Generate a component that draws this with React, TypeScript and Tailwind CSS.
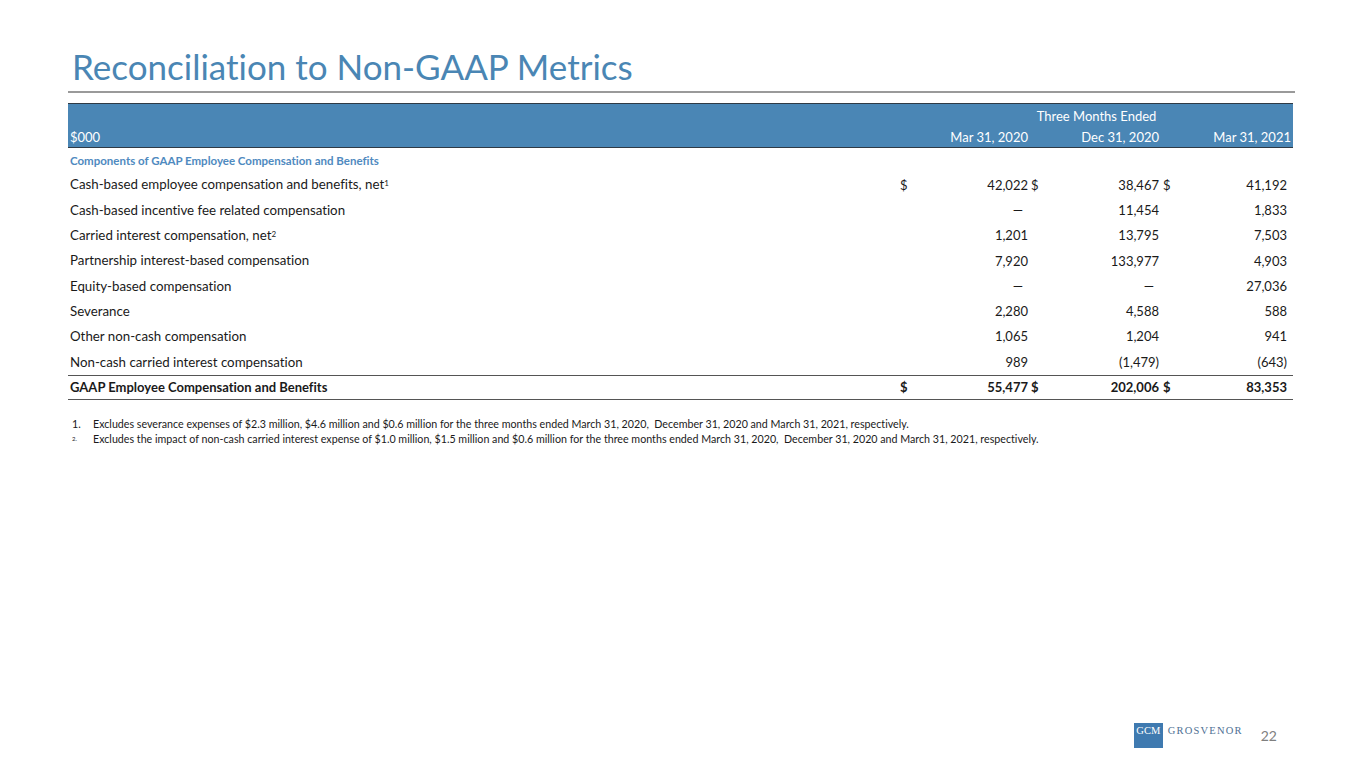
const rows = [
  { label: "Cash-based employee compensation and benefits, net", sup: "1", dollar: true, v: ["42,022", "38,467", "41,192"] },
  { label: "Cash-based incentive fee related compensation", v: ["—", "11,454", "1,833"] },
  { label: "Carried interest compensation, net", sup: "2", v: ["1,201", "13,795", "7,503"] },
  { label: "Partnership interest-based compensation", v: ["7,920", "133,977", "4,903"] },
  { label: "Equity-based compensation", v: ["—", "—", "27,036"] },
  { label: "Severance", v: ["2,280", "4,588", "588"] },
  { label: "Other non-cash compensation", v: ["1,065", "1,204", "941"] },
  { label: "Non-cash carried interest compensation", v: ["989", "(1,479)", "(643)"] },
];

function Val({ s }: { s: string }) {
  // dashes sit a little left of the number column's right edge
  return s === "—" ? <span className="mr-[5px]">{s}</span> : <span>{s}</span>;
}

function Cells({ v, dollar, bold }: { v: string[]; dollar?: boolean; bold?: boolean }) {
  const w = bold ? "font-bold" : "";
  return (
    <>
      <div className={`flex justify-between items-center pr-[2px] ${w}`}>
        <span>{dollar ? "$" : ""}</span>
        <Val s={v[0]} />
      </div>
      <div className={`flex justify-between items-center pl-[1px] pr-[2px] ${w}`}>
        <span>{dollar ? "$" : ""}</span>
        <Val s={v[1]} />
      </div>
      <div className={`flex justify-between items-center pl-[2px] pr-[6px] ${w}`}>
        <span>{dollar ? "$" : ""}</span>
        <Val s={v[2]} />
      </div>
    </>
  );
}

export default function App() {
  return (
    <div className="w-[1365px] h-[768px] bg-white flex flex-col font-['Lato','Open_Sans',sans-serif] text-[#1a1a1a] [font-variant-ligatures:none]">
      <h1 className="pl-[72px] pt-[44px] text-[35px] leading-[44px] text-[#4a86b4]">
        Reconciliation to Non-GAAP Metrics
      </h1>
      <div className="ml-[68px] mr-[70px] mt-[3px] h-[1.5px] bg-[#9a9a9a]" />

      <div className="ml-[68px] w-[1225px] mt-[10px] text-[13px]">
        <div className="h-[45px] bg-[#4a86b5] border-y border-[#2f3a45] text-white grid grid-cols-[832px_130px_131px_132px] grid-rows-[26px_17px]">
          <div />
          <div className="col-span-3 flex items-center justify-center">Three Months Ended</div>
          <div className="flex items-center pl-[2px]">$000</div>
          <div className="flex items-center justify-end pr-[2px]">Mar 31, 2020</div>
          <div className="flex items-center justify-end pr-[2px]">Dec 31, 2020</div>
          <div className="flex items-center justify-end pr-[2px]">Mar 31, 2021</div>
        </div>

        <div className="h-[25.3px] flex items-center pl-[2px] text-[11.5px] font-bold text-[#4f8ac0]">
          Components of GAAP Employee Compensation and Benefits
        </div>

        {rows.map((r) => (
          <div key={r.label} className="h-[25.3px] grid grid-cols-[832px_130px_131px_132px]">
            <div className="flex items-center pl-[2px] text-[13.3px]">
              <span>
                {r.label}
                {r.sup && <sup className="text-[8px] relative -top-[3px]">{r.sup}</sup>}
              </span>
            </div>
            <Cells v={r.v} dollar={r.dollar} />
          </div>
        ))}

        <div className="h-[25.3px] grid grid-cols-[832px_130px_131px_132px] border-y border-[#555]">
          <div className="flex items-center pl-[2px] font-bold">GAAP Employee Compensation and Benefits</div>
          <Cells v={["55,477", "202,006", "83,353"]} dollar bold />
        </div>
      </div>

      <div className="ml-[72px] mt-[16px] text-[10.7px] leading-[15px]">
        <div className="flex">
          <span className="w-[21px]">1.</span>
          <span>
            Excludes severance expenses of $2.3 million, $4.6 million and $0.6 million for the three months ended March 31, 2020,&nbsp; December 31, 2020 and March 31, 2021, respectively.
          </span>
        </div>
        <div className="flex">
          <span className="w-[21px] text-[6px] flex items-center">2.</span>
          <span>
            Excludes the impact of non-cash carried interest expense of $1.0 million, $1.5 million and $0.6 million for the three months ended March 31, 2020,&nbsp; December 31, 2020 and March 31, 2021, respectively.
          </span>
        </div>
      </div>

      <div className="mt-auto mb-[20px] flex items-end justify-end pr-[88px]">
        <div className="flex items-start">
          <div className="w-[29px] h-[25px] bg-[#3f7ab0] flex justify-center pt-[2px]">
            <span className="font-['Liberation_Serif',serif] text-[10.5px] leading-[12px] text-white">GCM</span>
          </div>
          <span className="ml-[5px] mt-[2px] font-['Liberation_Serif',serif] text-[10.5px] leading-[12px] tracking-[1.2px] text-[#4e6f93]">
            GROSVENOR
          </span>
        </div>
        <span className="ml-[18px] mb-[4px] text-[14px] leading-[16px] text-[#7f7f7f]">22</span>
      </div>
    </div>
  );
}
